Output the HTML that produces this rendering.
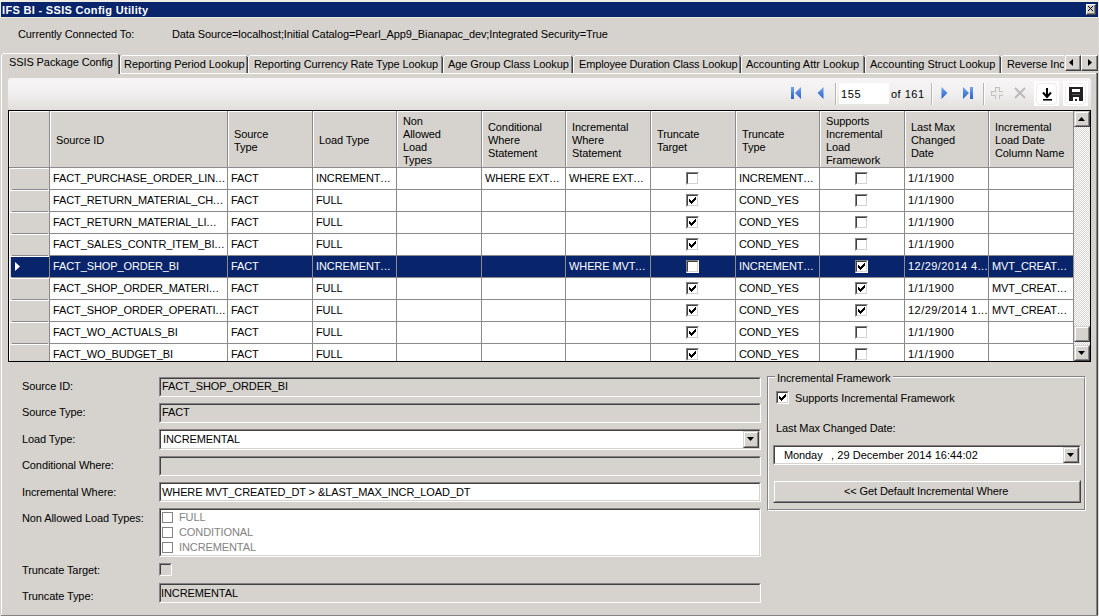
<!DOCTYPE html>
<html><head><meta charset="utf-8"><style>
html,body{margin:0;padding:0}
body{width:1099px;height:616px;overflow:hidden;background:#D6D3CE;position:relative}
div{position:absolute;box-sizing:content-box}
svg{position:absolute}
.t{font-family:"Liberation Sans",sans-serif;font-size:11px;line-height:13px;white-space:pre;color:#000;letter-spacing:-0.1px}
.tb{font-family:"Liberation Sans",sans-serif;font-size:11px;line-height:13px;white-space:pre;color:#fff;font-weight:bold;letter-spacing:0.32px}
</style></head><body>

<div style="left:0px;top:0px;width:1099px;height:2px;background:#EEEBE2;"></div>
<div style="left:0px;top:0px;width:1px;height:18px;background:#EEEBE2;"></div>
<div style="left:1098px;top:0px;width:1px;height:18px;background:#EEEBE2;"></div>
<div style="left:1098px;top:18px;width:1px;height:598px;background:#DCD9D2;"></div>
<div style="left:0px;top:17px;width:1099px;height:1px;background:#EAE7DF;"></div>
<div style="left:1px;top:2px;width:1097px;height:15px;background:#08246B;"></div>
<div class="tb" style="left:2px;top:4px;">IFS BI - SSIS Config Utility</div>
<div style="left:1086px;top:4px;width:8px;height:9px;background:#D6D3CE;border-top:1px solid #fff;border-left:1px solid #fff;border-bottom:1px solid #424142;border-right:1px solid #424142"><div style="left:0;top:0;width:7px;height:8px;border-bottom:1px solid #848284;border-right:1px solid #848284"></div></div>
<svg style="left:1088px;top:6px" width="5" height="5" viewBox="0 0 5 5" shape-rendering="crispEdges"><path d="M0 0h1v1h-1zM1 1h1v1h-1zM2 2h1v1h-1zM3 3h1v1h-1zM4 4h1v1h-1zM4 0h1v1h-1zM3 1h1v1h-1zM1 3h1v1h-1zM0 4h1v1h-1z" fill="#000"/></svg>
<div class="t" style="left:18px;top:28px;">Currently Connected To:</div>
<div class="t" style="left:172px;top:28px;">Data Source=localhost;Initial Catalog=Pearl_App9_Bianapac_dev;Integrated Security=True</div>
<div style="left:1px;top:73px;width:1097px;height:1px;background:#FFFFFF;"></div>
<div style="left:1px;top:73px;width:1px;height:543px;background:#FFFFFF;"></div>
<div style="left:1096px;top:73px;width:1px;height:543px;background:#848284;"></div>
<div style="left:1097px;top:73px;width:1px;height:543px;background:#424142;"></div>
<div style="left:1px;top:615px;width:1097px;height:1px;background:#848284;"></div>
<div style="left:120px;top:55px;width:128px;height:18px;overflow:hidden">
<div style="left:2px;top:0;width:124px;height:1px;background:#fff"></div>
<div style="left:1px;top:1px;width:1px;height:1px;background:#fff"></div>
<div style="left:0;top:2px;width:1px;height:16px;background:#fff"></div>
<div style="left:126px;top:1px;width:1px;height:17px;background:#848284"></div>
<div style="left:127px;top:2px;width:1px;height:16px;background:#424142"></div>
<div class="t" style="left:4px;top:3px;letter-spacing:-0.05px">Reporting Period Lookup</div>
</div>
<div style="left:248px;top:55px;width:195px;height:18px;overflow:hidden">
<div style="left:2px;top:0;width:191px;height:1px;background:#fff"></div>
<div style="left:1px;top:1px;width:1px;height:1px;background:#fff"></div>
<div style="left:0;top:2px;width:1px;height:16px;background:#fff"></div>
<div style="left:193px;top:1px;width:1px;height:17px;background:#848284"></div>
<div style="left:194px;top:2px;width:1px;height:16px;background:#424142"></div>
<div class="t" style="left:6px;top:3px;">Reporting Currency Rate Type Lookup</div>
</div>
<div style="left:443px;top:55px;width:130px;height:18px;overflow:hidden">
<div style="left:2px;top:0;width:126px;height:1px;background:#fff"></div>
<div style="left:1px;top:1px;width:1px;height:1px;background:#fff"></div>
<div style="left:0;top:2px;width:1px;height:16px;background:#fff"></div>
<div style="left:128px;top:1px;width:1px;height:17px;background:#848284"></div>
<div style="left:129px;top:2px;width:1px;height:16px;background:#424142"></div>
<div class="t" style="left:5px;top:3px;">Age Group Class Lookup</div>
</div>
<div style="left:573px;top:55px;width:168px;height:18px;overflow:hidden">
<div style="left:2px;top:0;width:164px;height:1px;background:#fff"></div>
<div style="left:1px;top:1px;width:1px;height:1px;background:#fff"></div>
<div style="left:0;top:2px;width:1px;height:16px;background:#fff"></div>
<div style="left:166px;top:1px;width:1px;height:17px;background:#848284"></div>
<div style="left:167px;top:2px;width:1px;height:16px;background:#424142"></div>
<div class="t" style="left:6px;top:3px;letter-spacing:-0.16px">Employee Duration Class Lookup</div>
</div>
<div style="left:741px;top:55px;width:124px;height:18px;overflow:hidden">
<div style="left:2px;top:0;width:120px;height:1px;background:#fff"></div>
<div style="left:1px;top:1px;width:1px;height:1px;background:#fff"></div>
<div style="left:0;top:2px;width:1px;height:16px;background:#fff"></div>
<div style="left:122px;top:1px;width:1px;height:17px;background:#848284"></div>
<div style="left:123px;top:2px;width:1px;height:16px;background:#424142"></div>
<div class="t" style="left:5px;top:3px;letter-spacing:0px">Accounting Attr Lookup</div>
</div>
<div style="left:865px;top:55px;width:136px;height:18px;overflow:hidden">
<div style="left:2px;top:0;width:132px;height:1px;background:#fff"></div>
<div style="left:1px;top:1px;width:1px;height:1px;background:#fff"></div>
<div style="left:0;top:2px;width:1px;height:16px;background:#fff"></div>
<div style="left:134px;top:1px;width:1px;height:17px;background:#848284"></div>
<div style="left:135px;top:2px;width:1px;height:16px;background:#424142"></div>
<div class="t" style="left:5px;top:3px;letter-spacing:0px">Accounting Struct Lookup</div>
</div>
<div style="left:1001px;top:55px;width:63px;height:18px;overflow:hidden">
<div style="left:2px;top:0;width:86px;height:1px;background:#fff"></div>
<div style="left:1px;top:1px;width:1px;height:1px;background:#fff"></div>
<div style="left:0;top:2px;width:1px;height:16px;background:#fff"></div>
<div style="left:88px;top:1px;width:1px;height:17px;background:#848284"></div>
<div style="left:89px;top:2px;width:1px;height:16px;background:#424142"></div>
<div class="t" style="left:6px;top:3px;">Reverse Incremental Lookup</div>
</div>
<div style="left:1px;top:53px;width:119px;height:21px;background:#D6D3CE">
<div style="left:2px;top:0;width:115px;height:1px;background:#fff"></div>
<div style="left:1px;top:1px;width:1px;height:1px;background:#fff"></div>
<div style="left:0;top:2px;width:1px;height:19px;background:#fff"></div>
<div style="left:117px;top:1px;width:1px;height:20px;background:#848284"></div>
<div style="left:118px;top:2px;width:1px;height:19px;background:#424142"></div>
<div class="t" style="left:8px;top:3px">SSIS Package Config</div>
</div>
<div style="left:1065px;top:55px;width:14px;height:14px;background:#D6D3CE;border-top:1px solid #fff;border-left:1px solid #fff;border-bottom:1px solid #424142;border-right:1px solid #424142"><div style="left:0;top:0;width:13px;height:13px;border-bottom:1px solid #848284;border-right:1px solid #848284"></div></div>
<div style="left:1081px;top:55px;width:15px;height:14px;background:#D6D3CE;border-top:1px solid #fff;border-left:1px solid #fff;border-bottom:1px solid #424142;border-right:1px solid #424142"><div style="left:0;top:0;width:14px;height:13px;border-bottom:1px solid #848284;border-right:1px solid #848284"></div></div>
<svg style="left:1069px;top:59px" width="4" height="7"><path d="M4 0V7L0 3.5z" fill="#000"/></svg>
<svg style="left:1088px;top:59px" width="4" height="7"><path d="M0 0V7L4 3.5z" fill="#000"/></svg>
<div style="left:8px;top:78px;width:1083px;height:32px;border-radius:3px;background:linear-gradient(#F7F5F5,#F0EEEE 50%,#E2DEDB)"></div>
<svg style="left:791px;top:87px" width="11" height="12" viewBox="0 0 11 12"><defs><linearGradient id="bl" x1="0" y1="0" x2="0" y2="1"><stop offset="0" stop-color="#6FA4F0"/><stop offset="1" stop-color="#2A62C8"/></linearGradient></defs><rect x="0" y="0" width="3" height="12" fill="url(#bl)"/><path d="M10 0V12L4 6z" fill="url(#bl)"/></svg>
<svg style="left:817px;top:87px" width="7" height="12" viewBox="0 0 7 12"><path d="M6.5 0V12L0.5 6z" fill="url(#bl)"/></svg>
<div style="left:835px;top:83px;width:1px;height:22px;background:#B8B4B0"></div>
<div style="left:836px;top:83px;width:1px;height:22px;background:#FFFFFF"></div>
<div style="left:839px;top:83px;width:50px;height:21px;background:#fff"></div>
<div class="t" style="left:841px;top:88px;letter-spacing:0.6px">155</div>
<div class="t" style="left:891px;top:88px;letter-spacing:0.5px">of 161</div>
<div style="left:931px;top:83px;width:1px;height:22px;background:#B8B4B0"></div>
<div style="left:932px;top:83px;width:1px;height:22px;background:#FFFFFF"></div>
<svg style="left:941px;top:87px" width="7" height="12" viewBox="0 0 7 12"><path d="M0.5 0V12L6.5 6z" fill="url(#bl)"/></svg>
<svg style="left:963px;top:87px" width="11" height="12" viewBox="0 0 11 12"><path d="M0 0V12L6 6z" fill="url(#bl)"/><rect x="7" y="0" width="3" height="12" fill="url(#bl)"/></svg>
<div style="left:983px;top:83px;width:1px;height:22px;background:#B8B4B0"></div>
<div style="left:984px;top:83px;width:1px;height:22px;background:#FFFFFF"></div>
<svg style="left:991px;top:87px" width="12" height="12" viewBox="0 0 12 12" shape-rendering="crispEdges"><path d="M4 0H8V4H12V8H8V12H4V8H0V4H4z" fill="#EDEBEA" stroke="#C4C2C0" stroke-width="1"/></svg>
<svg style="left:1014px;top:87px" width="12" height="12" viewBox="0 0 12 12"><path d="M1 1L11 11M11 1L1 11" stroke="#BDBBB9" stroke-width="2"/></svg>
<div style="left:1034px;top:81px;width:25px;height:25px;background:#fff"></div>
<div style="left:1036px;top:83px;width:19px;height:20px;border:1px solid #EFEBEF;border-radius:4px"></div>
<svg style="left:1040px;top:86px" width="14" height="16" viewBox="0 0 14 16"><path d="M7 2V11M3 6.5L7 11L11 6.5" stroke="#000" stroke-width="2" fill="none"/><rect x="3" y="13" width="9" height="1.6" fill="#000"/></svg>
<div style="left:1063px;top:81px;width:25px;height:25px;background:#fff"></div>
<div style="left:1065px;top:83px;width:19px;height:20px;border:1px solid #EFEBEF;border-radius:4px"></div>
<svg style="left:1069px;top:87px" width="14" height="14" viewBox="0 0 14 14" shape-rendering="crispEdges"><rect x="0" y="0" width="14" height="14" fill="#222"/><rect x="3" y="2" width="8" height="3" fill="#fff"/><rect x="3" y="7" width="8" height="1" fill="#555"/><rect x="4" y="10" width="6" height="4" fill="#fff"/><rect x="6" y="12" width="2" height="2" fill="#222"/></svg>
<div style="left:8px;top:110px;width:1081px;height:250px;border:1px solid #000;background:#fff;overflow:hidden">
<div style="left:0px;top:0px;width:1065px;height:56px;background:#D6D3CE;"></div>
<div style="left:0px;top:0px;width:40px;height:250px;background:#D6D3CE;"></div>
<div style="left:0px;top:0px;width:1064px;height:1px;background:#FFFFFF;"></div>
<div style="left:0px;top:0px;width:1px;height:250px;background:#FFFFFF;"></div>
<div style="left:0px;top:56px;width:1064px;height:1px;background:#8C8A8C;"></div>
<div style="left:40px;top:0px;width:1px;height:250px;background:#8C8A8C;"></div>
<div style="left:218px;top:0px;width:1px;height:250px;background:#8C8A8C;"></div>
<div style="left:303px;top:0px;width:1px;height:250px;background:#8C8A8C;"></div>
<div style="left:387px;top:0px;width:1px;height:250px;background:#8C8A8C;"></div>
<div style="left:472px;top:0px;width:1px;height:250px;background:#8C8A8C;"></div>
<div style="left:556px;top:0px;width:1px;height:250px;background:#8C8A8C;"></div>
<div style="left:641px;top:0px;width:1px;height:250px;background:#8C8A8C;"></div>
<div style="left:726px;top:0px;width:1px;height:250px;background:#8C8A8C;"></div>
<div style="left:810px;top:0px;width:1px;height:250px;background:#8C8A8C;"></div>
<div style="left:895px;top:0px;width:1px;height:250px;background:#8C8A8C;"></div>
<div style="left:979px;top:0px;width:1px;height:250px;background:#8C8A8C;"></div>
<div style="left:1064px;top:0px;width:1px;height:250px;background:#8C8A8C;"></div>
<div style="left:41px;top:1px;width:1px;height:55px;background:#FFFFFF;"></div>
<div style="left:219px;top:1px;width:1px;height:55px;background:#FFFFFF;"></div>
<div style="left:304px;top:1px;width:1px;height:55px;background:#FFFFFF;"></div>
<div style="left:388px;top:1px;width:1px;height:55px;background:#FFFFFF;"></div>
<div style="left:473px;top:1px;width:1px;height:55px;background:#FFFFFF;"></div>
<div style="left:557px;top:1px;width:1px;height:55px;background:#FFFFFF;"></div>
<div style="left:642px;top:1px;width:1px;height:55px;background:#FFFFFF;"></div>
<div style="left:727px;top:1px;width:1px;height:55px;background:#FFFFFF;"></div>
<div style="left:811px;top:1px;width:1px;height:55px;background:#FFFFFF;"></div>
<div style="left:896px;top:1px;width:1px;height:55px;background:#FFFFFF;"></div>
<div style="left:980px;top:1px;width:1px;height:55px;background:#FFFFFF;"></div>
<div style="left:1px;top:57px;width:39px;height:1px;background:#FFFFFF;"></div>
<div style="left:3px;top:78px;width:36px;height:1px;background:#8C8A8C;"></div>
<div style="left:41px;top:78px;width:1023px;height:1px;background:#8C8A8C;"></div>
<div class="t" style="left:44px;top:61px;color:#000;">FACT_PURCHASE_ORDER_LIN<span style="letter-spacing:0.35px">...</span></div>
<div class="t" style="left:222px;top:61px;color:#000;">FACT</div>
<div class="t" style="left:307px;top:61px;color:#000;">INCREMENT<span style="letter-spacing:0.35px">...</span></div>
<div class="t" style="left:476px;top:61px;color:#000;">WHERE EXT<span style="letter-spacing:0.35px">...</span></div>
<div class="t" style="left:560px;top:61px;color:#000;">WHERE EXT<span style="letter-spacing:0.35px">...</span></div>
<div class="t" style="left:730px;top:61px;color:#000;">INCREMENT<span style="letter-spacing:0.35px">...</span></div>
<div class="t" style="left:899px;top:61px;color:#000;letter-spacing:0.45px;">1/1/1900</div>
<div style="left:677px;top:61px;width:11px;height:11px;background:#fff;border-top:1px solid #848284;border-left:1px solid #848284;border-bottom:1px solid #fff;border-right:1px solid #fff"><div style="left:0;top:0;width:9px;height:9px;border-top:1px solid #424142;border-left:1px solid #424142;border-bottom:1px solid #D6D3CE;border-right:1px solid #D6D3CE"></div></div>
<div style="left:846px;top:61px;width:11px;height:11px;background:#fff;border-top:1px solid #848284;border-left:1px solid #848284;border-bottom:1px solid #fff;border-right:1px solid #fff"><div style="left:0;top:0;width:9px;height:9px;border-top:1px solid #424142;border-left:1px solid #424142;border-bottom:1px solid #D6D3CE;border-right:1px solid #D6D3CE"></div></div>
<div style="left:1px;top:79px;width:39px;height:1px;background:#FFFFFF;"></div>
<div style="left:3px;top:100px;width:36px;height:1px;background:#8C8A8C;"></div>
<div style="left:41px;top:100px;width:1023px;height:1px;background:#8C8A8C;"></div>
<div class="t" style="left:44px;top:83px;color:#000;">FACT_RETURN_MATERIAL_CH<span style="letter-spacing:0.35px">...</span></div>
<div class="t" style="left:222px;top:83px;color:#000;">FACT</div>
<div class="t" style="left:307px;top:83px;color:#000;">FULL</div>
<div class="t" style="left:730px;top:83px;color:#000;">COND_YES</div>
<div class="t" style="left:899px;top:83px;color:#000;letter-spacing:0.45px;">1/1/1900</div>
<div style="left:677px;top:83px;width:11px;height:11px;background:#fff;border-top:1px solid #848284;border-left:1px solid #848284;border-bottom:1px solid #fff;border-right:1px solid #fff"><div style="left:0;top:0;width:9px;height:9px;border-top:1px solid #424142;border-left:1px solid #424142;border-bottom:1px solid #D6D3CE;border-right:1px solid #D6D3CE"></div></div>
<svg style="left:680px;top:86px" width="7" height="7" viewBox="0 0 7 7" shape-rendering="crispEdges"><path d="M6 0h1v3h-1zM5 1h1v3h-1zM4 2h1v3h-1zM3 3h1v3h-1zM2 4h1v3h-1zM1 3h1v3h-1zM0 2h1v3h-1z" fill="#000"/></svg>
<div style="left:846px;top:83px;width:11px;height:11px;background:#fff;border-top:1px solid #848284;border-left:1px solid #848284;border-bottom:1px solid #fff;border-right:1px solid #fff"><div style="left:0;top:0;width:9px;height:9px;border-top:1px solid #424142;border-left:1px solid #424142;border-bottom:1px solid #D6D3CE;border-right:1px solid #D6D3CE"></div></div>
<div style="left:1px;top:101px;width:39px;height:1px;background:#FFFFFF;"></div>
<div style="left:3px;top:122px;width:36px;height:1px;background:#8C8A8C;"></div>
<div style="left:41px;top:122px;width:1023px;height:1px;background:#8C8A8C;"></div>
<div class="t" style="left:44px;top:105px;color:#000;">FACT_RETURN_MATERIAL_LI<span style="letter-spacing:0.35px">...</span></div>
<div class="t" style="left:222px;top:105px;color:#000;">FACT</div>
<div class="t" style="left:307px;top:105px;color:#000;">FULL</div>
<div class="t" style="left:730px;top:105px;color:#000;">COND_YES</div>
<div class="t" style="left:899px;top:105px;color:#000;letter-spacing:0.45px;">1/1/1900</div>
<div style="left:677px;top:105px;width:11px;height:11px;background:#fff;border-top:1px solid #848284;border-left:1px solid #848284;border-bottom:1px solid #fff;border-right:1px solid #fff"><div style="left:0;top:0;width:9px;height:9px;border-top:1px solid #424142;border-left:1px solid #424142;border-bottom:1px solid #D6D3CE;border-right:1px solid #D6D3CE"></div></div>
<svg style="left:680px;top:108px" width="7" height="7" viewBox="0 0 7 7" shape-rendering="crispEdges"><path d="M6 0h1v3h-1zM5 1h1v3h-1zM4 2h1v3h-1zM3 3h1v3h-1zM2 4h1v3h-1zM1 3h1v3h-1zM0 2h1v3h-1z" fill="#000"/></svg>
<div style="left:846px;top:105px;width:11px;height:11px;background:#fff;border-top:1px solid #848284;border-left:1px solid #848284;border-bottom:1px solid #fff;border-right:1px solid #fff"><div style="left:0;top:0;width:9px;height:9px;border-top:1px solid #424142;border-left:1px solid #424142;border-bottom:1px solid #D6D3CE;border-right:1px solid #D6D3CE"></div></div>
<div style="left:1px;top:123px;width:39px;height:1px;background:#FFFFFF;"></div>
<div style="left:3px;top:144px;width:36px;height:1px;background:#8C8A8C;"></div>
<div style="left:41px;top:144px;width:1023px;height:1px;background:#8C8A8C;"></div>
<div class="t" style="left:44px;top:127px;color:#000;">FACT_SALES_CONTR_ITEM_BI<span style="letter-spacing:0.35px">...</span></div>
<div class="t" style="left:222px;top:127px;color:#000;">FACT</div>
<div class="t" style="left:307px;top:127px;color:#000;">FULL</div>
<div class="t" style="left:730px;top:127px;color:#000;">COND_YES</div>
<div class="t" style="left:899px;top:127px;color:#000;letter-spacing:0.45px;">1/1/1900</div>
<div style="left:677px;top:127px;width:11px;height:11px;background:#fff;border-top:1px solid #848284;border-left:1px solid #848284;border-bottom:1px solid #fff;border-right:1px solid #fff"><div style="left:0;top:0;width:9px;height:9px;border-top:1px solid #424142;border-left:1px solid #424142;border-bottom:1px solid #D6D3CE;border-right:1px solid #D6D3CE"></div></div>
<svg style="left:680px;top:130px" width="7" height="7" viewBox="0 0 7 7" shape-rendering="crispEdges"><path d="M6 0h1v3h-1zM5 1h1v3h-1zM4 2h1v3h-1zM3 3h1v3h-1zM2 4h1v3h-1zM1 3h1v3h-1zM0 2h1v3h-1z" fill="#000"/></svg>
<div style="left:846px;top:127px;width:11px;height:11px;background:#fff;border-top:1px solid #848284;border-left:1px solid #848284;border-bottom:1px solid #fff;border-right:1px solid #fff"><div style="left:0;top:0;width:9px;height:9px;border-top:1px solid #424142;border-left:1px solid #424142;border-bottom:1px solid #D6D3CE;border-right:1px solid #D6D3CE"></div></div>
<div style="left:1px;top:145px;width:39px;height:1px;background:#FFFFFF;"></div>
<div style="left:3px;top:166px;width:36px;height:1px;background:#8C8A8C;"></div>
<div style="left:41px;top:166px;width:1023px;height:1px;background:#8C8A8C;"></div>
<div style="left:2px;top:146px;width:38px;height:20px;background:#08246B;"></div>
<div style="left:41px;top:145px;width:1023px;height:21px;background:#08246B;"></div>
<div style="left:218px;top:145px;width:1px;height:21px;background:#8C8A8C;"></div>
<div style="left:303px;top:145px;width:1px;height:21px;background:#8C8A8C;"></div>
<div style="left:387px;top:145px;width:1px;height:21px;background:#8C8A8C;"></div>
<div style="left:472px;top:145px;width:1px;height:21px;background:#8C8A8C;"></div>
<div style="left:556px;top:145px;width:1px;height:21px;background:#8C8A8C;"></div>
<div style="left:641px;top:145px;width:1px;height:21px;background:#8C8A8C;"></div>
<div style="left:726px;top:145px;width:1px;height:21px;background:#8C8A8C;"></div>
<div style="left:810px;top:145px;width:1px;height:21px;background:#8C8A8C;"></div>
<div style="left:895px;top:145px;width:1px;height:21px;background:#8C8A8C;"></div>
<div style="left:979px;top:145px;width:1px;height:21px;background:#8C8A8C;"></div>
<svg style="left:6px;top:151px" width="5" height="9"><path d="M0 0V9L5 4.5z" fill="#fff"/></svg>
<div class="t" style="left:44px;top:149px;color:#fff;">FACT_SHOP_ORDER_BI</div>
<div class="t" style="left:222px;top:149px;color:#fff;">FACT</div>
<div class="t" style="left:307px;top:149px;color:#fff;">INCREMENT<span style="letter-spacing:0.35px">...</span></div>
<div class="t" style="left:560px;top:149px;color:#fff;">WHERE MVT<span style="letter-spacing:0.35px">...</span></div>
<div class="t" style="left:730px;top:149px;color:#fff;">INCREMENT<span style="letter-spacing:0.35px">...</span></div>
<div class="t" style="left:899px;top:149px;color:#fff;letter-spacing:0.45px;">12/29/2014 4<span style="letter-spacing:0.35px">...</span></div>
<div class="t" style="left:983px;top:149px;color:#fff;">MVT_CREAT<span style="letter-spacing:0.35px">...</span></div>
<div style="left:677px;top:149px;width:11px;height:11px;background:#fff;border-top:1px solid #848284;border-left:1px solid #848284;border-bottom:1px solid #fff;border-right:1px solid #fff"><div style="left:0;top:0;width:9px;height:9px;border-top:1px solid #424142;border-left:1px solid #424142;border-bottom:1px solid #D6D3CE;border-right:1px solid #D6D3CE"></div></div>
<div style="left:846px;top:149px;width:11px;height:11px;background:#fff;border-top:1px solid #848284;border-left:1px solid #848284;border-bottom:1px solid #fff;border-right:1px solid #fff"><div style="left:0;top:0;width:9px;height:9px;border-top:1px solid #424142;border-left:1px solid #424142;border-bottom:1px solid #D6D3CE;border-right:1px solid #D6D3CE"></div></div>
<svg style="left:849px;top:152px" width="7" height="7" viewBox="0 0 7 7" shape-rendering="crispEdges"><path d="M6 0h1v3h-1zM5 1h1v3h-1zM4 2h1v3h-1zM3 3h1v3h-1zM2 4h1v3h-1zM1 3h1v3h-1zM0 2h1v3h-1z" fill="#000"/></svg>
<div style="left:1px;top:167px;width:39px;height:1px;background:#FFFFFF;"></div>
<div style="left:3px;top:188px;width:36px;height:1px;background:#8C8A8C;"></div>
<div style="left:41px;top:188px;width:1023px;height:1px;background:#8C8A8C;"></div>
<div class="t" style="left:44px;top:171px;color:#000;">FACT_SHOP_ORDER_MATERI<span style="letter-spacing:0.35px">...</span></div>
<div class="t" style="left:222px;top:171px;color:#000;">FACT</div>
<div class="t" style="left:307px;top:171px;color:#000;">FULL</div>
<div class="t" style="left:730px;top:171px;color:#000;">COND_YES</div>
<div class="t" style="left:899px;top:171px;color:#000;letter-spacing:0.45px;">1/1/1900</div>
<div class="t" style="left:983px;top:171px;color:#000;">MVT_CREAT<span style="letter-spacing:0.35px">...</span></div>
<div style="left:677px;top:171px;width:11px;height:11px;background:#fff;border-top:1px solid #848284;border-left:1px solid #848284;border-bottom:1px solid #fff;border-right:1px solid #fff"><div style="left:0;top:0;width:9px;height:9px;border-top:1px solid #424142;border-left:1px solid #424142;border-bottom:1px solid #D6D3CE;border-right:1px solid #D6D3CE"></div></div>
<svg style="left:680px;top:174px" width="7" height="7" viewBox="0 0 7 7" shape-rendering="crispEdges"><path d="M6 0h1v3h-1zM5 1h1v3h-1zM4 2h1v3h-1zM3 3h1v3h-1zM2 4h1v3h-1zM1 3h1v3h-1zM0 2h1v3h-1z" fill="#000"/></svg>
<div style="left:846px;top:171px;width:11px;height:11px;background:#fff;border-top:1px solid #848284;border-left:1px solid #848284;border-bottom:1px solid #fff;border-right:1px solid #fff"><div style="left:0;top:0;width:9px;height:9px;border-top:1px solid #424142;border-left:1px solid #424142;border-bottom:1px solid #D6D3CE;border-right:1px solid #D6D3CE"></div></div>
<svg style="left:849px;top:174px" width="7" height="7" viewBox="0 0 7 7" shape-rendering="crispEdges"><path d="M6 0h1v3h-1zM5 1h1v3h-1zM4 2h1v3h-1zM3 3h1v3h-1zM2 4h1v3h-1zM1 3h1v3h-1zM0 2h1v3h-1z" fill="#000"/></svg>
<div style="left:1px;top:189px;width:39px;height:1px;background:#FFFFFF;"></div>
<div style="left:3px;top:210px;width:36px;height:1px;background:#8C8A8C;"></div>
<div style="left:41px;top:210px;width:1023px;height:1px;background:#8C8A8C;"></div>
<div class="t" style="left:44px;top:193px;color:#000;">FACT_SHOP_ORDER_OPERATI<span style="letter-spacing:0.35px">...</span></div>
<div class="t" style="left:222px;top:193px;color:#000;">FACT</div>
<div class="t" style="left:307px;top:193px;color:#000;">FULL</div>
<div class="t" style="left:730px;top:193px;color:#000;">COND_YES</div>
<div class="t" style="left:899px;top:193px;color:#000;letter-spacing:0.45px;">12/29/2014 1<span style="letter-spacing:0.35px">...</span></div>
<div class="t" style="left:983px;top:193px;color:#000;">MVT_CREAT<span style="letter-spacing:0.35px">...</span></div>
<div style="left:677px;top:193px;width:11px;height:11px;background:#fff;border-top:1px solid #848284;border-left:1px solid #848284;border-bottom:1px solid #fff;border-right:1px solid #fff"><div style="left:0;top:0;width:9px;height:9px;border-top:1px solid #424142;border-left:1px solid #424142;border-bottom:1px solid #D6D3CE;border-right:1px solid #D6D3CE"></div></div>
<svg style="left:680px;top:196px" width="7" height="7" viewBox="0 0 7 7" shape-rendering="crispEdges"><path d="M6 0h1v3h-1zM5 1h1v3h-1zM4 2h1v3h-1zM3 3h1v3h-1zM2 4h1v3h-1zM1 3h1v3h-1zM0 2h1v3h-1z" fill="#000"/></svg>
<div style="left:846px;top:193px;width:11px;height:11px;background:#fff;border-top:1px solid #848284;border-left:1px solid #848284;border-bottom:1px solid #fff;border-right:1px solid #fff"><div style="left:0;top:0;width:9px;height:9px;border-top:1px solid #424142;border-left:1px solid #424142;border-bottom:1px solid #D6D3CE;border-right:1px solid #D6D3CE"></div></div>
<svg style="left:849px;top:196px" width="7" height="7" viewBox="0 0 7 7" shape-rendering="crispEdges"><path d="M6 0h1v3h-1zM5 1h1v3h-1zM4 2h1v3h-1zM3 3h1v3h-1zM2 4h1v3h-1zM1 3h1v3h-1zM0 2h1v3h-1z" fill="#000"/></svg>
<div style="left:1px;top:211px;width:39px;height:1px;background:#FFFFFF;"></div>
<div style="left:3px;top:232px;width:36px;height:1px;background:#8C8A8C;"></div>
<div style="left:41px;top:232px;width:1023px;height:1px;background:#8C8A8C;"></div>
<div class="t" style="left:44px;top:215px;color:#000;">FACT_WO_ACTUALS_BI</div>
<div class="t" style="left:222px;top:215px;color:#000;">FACT</div>
<div class="t" style="left:307px;top:215px;color:#000;">FULL</div>
<div class="t" style="left:730px;top:215px;color:#000;">COND_YES</div>
<div class="t" style="left:899px;top:215px;color:#000;letter-spacing:0.45px;">1/1/1900</div>
<div style="left:677px;top:215px;width:11px;height:11px;background:#fff;border-top:1px solid #848284;border-left:1px solid #848284;border-bottom:1px solid #fff;border-right:1px solid #fff"><div style="left:0;top:0;width:9px;height:9px;border-top:1px solid #424142;border-left:1px solid #424142;border-bottom:1px solid #D6D3CE;border-right:1px solid #D6D3CE"></div></div>
<svg style="left:680px;top:218px" width="7" height="7" viewBox="0 0 7 7" shape-rendering="crispEdges"><path d="M6 0h1v3h-1zM5 1h1v3h-1zM4 2h1v3h-1zM3 3h1v3h-1zM2 4h1v3h-1zM1 3h1v3h-1zM0 2h1v3h-1z" fill="#000"/></svg>
<div style="left:846px;top:215px;width:11px;height:11px;background:#fff;border-top:1px solid #848284;border-left:1px solid #848284;border-bottom:1px solid #fff;border-right:1px solid #fff"><div style="left:0;top:0;width:9px;height:9px;border-top:1px solid #424142;border-left:1px solid #424142;border-bottom:1px solid #D6D3CE;border-right:1px solid #D6D3CE"></div></div>
<div style="left:1px;top:233px;width:39px;height:1px;background:#FFFFFF;"></div>
<div style="left:3px;top:254px;width:36px;height:1px;background:#8C8A8C;"></div>
<div style="left:41px;top:254px;width:1023px;height:1px;background:#8C8A8C;"></div>
<div class="t" style="left:44px;top:237px;color:#000;">FACT_WO_BUDGET_BI</div>
<div class="t" style="left:222px;top:237px;color:#000;">FACT</div>
<div class="t" style="left:307px;top:237px;color:#000;">FULL</div>
<div class="t" style="left:730px;top:237px;color:#000;">COND_YES</div>
<div class="t" style="left:899px;top:237px;color:#000;letter-spacing:0.45px;">1/1/1900</div>
<div style="left:677px;top:237px;width:11px;height:11px;background:#fff;border-top:1px solid #848284;border-left:1px solid #848284;border-bottom:1px solid #fff;border-right:1px solid #fff"><div style="left:0;top:0;width:9px;height:9px;border-top:1px solid #424142;border-left:1px solid #424142;border-bottom:1px solid #D6D3CE;border-right:1px solid #D6D3CE"></div></div>
<svg style="left:680px;top:240px" width="7" height="7" viewBox="0 0 7 7" shape-rendering="crispEdges"><path d="M6 0h1v3h-1zM5 1h1v3h-1zM4 2h1v3h-1zM3 3h1v3h-1zM2 4h1v3h-1zM1 3h1v3h-1zM0 2h1v3h-1z" fill="#000"/></svg>
<div style="left:846px;top:237px;width:11px;height:11px;background:#fff;border-top:1px solid #848284;border-left:1px solid #848284;border-bottom:1px solid #fff;border-right:1px solid #fff"><div style="left:0;top:0;width:9px;height:9px;border-top:1px solid #424142;border-left:1px solid #424142;border-bottom:1px solid #D6D3CE;border-right:1px solid #D6D3CE"></div></div>
<div class="t" style="left:47px;top:23px">Source ID</div>
<div class="t" style="left:225px;top:17px">Source</div>
<div class="t" style="left:225px;top:30px">Type</div>
<div class="t" style="left:310px;top:23px">Load Type</div>
<div class="t" style="left:394px;top:4px">Non</div>
<div class="t" style="left:394px;top:17px">Allowed</div>
<div class="t" style="left:394px;top:30px">Load</div>
<div class="t" style="left:394px;top:43px">Types</div>
<div class="t" style="left:479px;top:10px">Conditional</div>
<div class="t" style="left:479px;top:23px">Where</div>
<div class="t" style="left:479px;top:36px">Statement</div>
<div class="t" style="left:563px;top:10px">Incremental</div>
<div class="t" style="left:563px;top:23px">Where</div>
<div class="t" style="left:563px;top:36px">Statement</div>
<div class="t" style="left:648px;top:17px">Truncate</div>
<div class="t" style="left:648px;top:30px">Target</div>
<div class="t" style="left:733px;top:17px">Truncate</div>
<div class="t" style="left:733px;top:30px">Type</div>
<div class="t" style="left:817px;top:4px">Supports</div>
<div class="t" style="left:817px;top:17px">Incremental</div>
<div class="t" style="left:817px;top:30px">Load</div>
<div class="t" style="left:817px;top:43px">Framework</div>
<div class="t" style="left:902px;top:10px">Last Max</div>
<div class="t" style="left:902px;top:23px">Changed</div>
<div class="t" style="left:902px;top:36px">Date</div>
<div class="t" style="left:986px;top:10px">Incremental</div>
<div class="t" style="left:986px;top:23px">Load Date</div>
<div class="t" style="left:986px;top:36px">Column Name</div>
</div>
<div style="left:1074px;top:111px;width:16px;height:250px;background:repeating-conic-gradient(#fff 0 25%, #D6D3CE 0 50%) 0 0/2px 2px"></div>
<div style="left:1074px;top:111px;width:14px;height:14px;background:#D6D3CE;border-top:1px solid #D6D3CE;border-left:1px solid #D6D3CE;border-bottom:1px solid #424142;border-right:1px solid #424142"><div style="left:0;top:0;width:12px;height:12px;border-top:1px solid #fff;border-left:1px solid #fff;border-bottom:1px solid #848284;border-right:1px solid #848284"></div></div>
<svg style="left:1078px;top:117px" width="7" height="4" viewBox="0 0 7 4"><path d="M3.5 0L7 4H0z" fill="#000"/></svg>
<div style="left:1074px;top:326px;width:14px;height:14px;background:#D6D3CE;border-top:1px solid #D6D3CE;border-left:1px solid #D6D3CE;border-bottom:1px solid #424142;border-right:1px solid #424142"><div style="left:0;top:0;width:12px;height:12px;border-top:1px solid #fff;border-left:1px solid #fff;border-bottom:1px solid #848284;border-right:1px solid #848284"></div></div>
<div style="left:1074px;top:345px;width:14px;height:14px;background:#D6D3CE;border-top:1px solid #D6D3CE;border-left:1px solid #D6D3CE;border-bottom:1px solid #424142;border-right:1px solid #424142"><div style="left:0;top:0;width:12px;height:12px;border-top:1px solid #fff;border-left:1px solid #fff;border-bottom:1px solid #848284;border-right:1px solid #848284"></div></div>
<svg style="left:1078px;top:351px" width="7" height="4" viewBox="0 0 7 4"><path d="M0 0H7L3.5 4z" fill="#000"/></svg>
<div class="t" style="left:22px;top:380px;">Source ID:</div>
<div class="t" style="left:22px;top:406px;">Source Type:</div>
<div class="t" style="left:22px;top:433px;">Load Type:</div>
<div class="t" style="left:22px;top:459px;">Conditional Where:</div>
<div class="t" style="left:22px;top:486px;">Incremental Where:</div>
<div class="t" style="left:22px;top:512px;">Non Allowed Load Types:</div>
<div class="t" style="left:22px;top:564px;">Truncate Target:</div>
<div class="t" style="left:22px;top:590px;">Truncate Type:</div>
<div style="left:159px;top:377px;width:600px;height:18px;background:#D6D3CE;border-top:1px solid #848284;border-left:1px solid #848284;border-bottom:1px solid #fff;border-right:1px solid #fff"><div style="left:0;top:0;width:598px;height:16px;border-top:1px solid #424142;border-left:1px solid #424142;border-bottom:1px solid #D6D3CE;border-right:1px solid #D6D3CE"></div></div>
<div class="t" style="left:162px;top:380px;">FACT_SHOP_ORDER_BI</div>
<div style="left:159px;top:403px;width:600px;height:18px;background:#D6D3CE;border-top:1px solid #848284;border-left:1px solid #848284;border-bottom:1px solid #fff;border-right:1px solid #fff"><div style="left:0;top:0;width:598px;height:16px;border-top:1px solid #424142;border-left:1px solid #424142;border-bottom:1px solid #D6D3CE;border-right:1px solid #D6D3CE"></div></div>
<div class="t" style="left:162px;top:406px;">FACT</div>
<div style="left:159px;top:429px;width:600px;height:19px;background:#fff;border-top:1px solid #848284;border-left:1px solid #848284;border-bottom:1px solid #fff;border-right:1px solid #fff"><div style="left:0;top:0;width:598px;height:17px;border-top:1px solid #424142;border-left:1px solid #424142;border-bottom:1px solid #D6D3CE;border-right:1px solid #D6D3CE"></div></div>
<div class="t" style="left:163px;top:433px;">INCREMENTAL</div>
<div style="left:743px;top:431px;width:14px;height:15px;background:#D6D3CE;border-top:1px solid #D6D3CE;border-left:1px solid #D6D3CE;border-bottom:1px solid #424142;border-right:1px solid #424142"><div style="left:0;top:0;width:12px;height:13px;border-top:1px solid #fff;border-left:1px solid #fff;border-bottom:1px solid #848284;border-right:1px solid #848284"></div></div>
<svg style="left:747px;top:437px" width="7" height="4" viewBox="0 0 7 4"><path d="M0 0H7L3.5 4z" fill="#000"/></svg>
<div style="left:159px;top:456px;width:600px;height:18px;background:#D6D3CE;border-top:1px solid #848284;border-left:1px solid #848284;border-bottom:1px solid #fff;border-right:1px solid #fff"><div style="left:0;top:0;width:598px;height:16px;border-top:1px solid #424142;border-left:1px solid #424142;border-bottom:1px solid #D6D3CE;border-right:1px solid #D6D3CE"></div></div>
<div style="left:159px;top:482px;width:600px;height:18px;background:#fff;border-top:1px solid #848284;border-left:1px solid #848284;border-bottom:1px solid #fff;border-right:1px solid #fff"><div style="left:0;top:0;width:598px;height:16px;border-top:1px solid #424142;border-left:1px solid #424142;border-bottom:1px solid #D6D3CE;border-right:1px solid #D6D3CE"></div></div>
<div class="t" style="left:162px;top:486px;">WHERE MVT_CREATED_DT &gt; &amp;LAST_MAX_INCR_LOAD_DT</div>
<div style="left:159px;top:508px;width:600px;height:47px;background:#fff;border-top:1px solid #848284;border-left:1px solid #848284;border-bottom:1px solid #fff;border-right:1px solid #fff"><div style="left:0;top:0;width:598px;height:45px;border-top:1px solid #424142;border-left:1px solid #424142;border-bottom:1px solid #D6D3CE;border-right:1px solid #D6D3CE"></div></div>
<div style="left:162px;top:512px;width:9px;height:9px;border:1px solid #848284;background:#fff"></div>
<div class="t" style="left:179px;top:511px;color:#848284">FULL</div>
<div style="left:162px;top:527px;width:9px;height:9px;border:1px solid #848284;background:#fff"></div>
<div class="t" style="left:179px;top:526px;color:#848284">CONDITIONAL</div>
<div style="left:162px;top:542px;width:9px;height:9px;border:1px solid #848284;background:#fff"></div>
<div class="t" style="left:179px;top:541px;color:#848284">INCREMENTAL</div>
<div style="left:159px;top:563px;width:11px;height:11px;background:#D6D3CE;border-top:1px solid #848284;border-left:1px solid #848284;border-bottom:1px solid #fff;border-right:1px solid #fff"><div style="left:0;top:0;width:9px;height:9px;border-top:1px solid #424142;border-left:1px solid #424142;border-bottom:1px solid #D6D3CE;border-right:1px solid #D6D3CE"></div></div>
<div style="left:159px;top:583px;width:600px;height:18px;background:#D6D3CE;border-top:1px solid #848284;border-left:1px solid #848284;border-bottom:1px solid #fff;border-right:1px solid #fff"><div style="left:0;top:0;width:598px;height:16px;border-top:1px solid #424142;border-left:1px solid #424142;border-bottom:1px solid #D6D3CE;border-right:1px solid #D6D3CE"></div></div>
<div class="t" style="left:161px;top:587px;">INCREMENTAL</div>
<div style="left:767px;top:376px;width:317px;height:133px;border-top:1px solid #848284;border-left:1px solid #848284;border-right:1px solid #fff;border-bottom:1px solid #fff"><div style="left:0;top:0;width:315px;height:131px;border-top:1px solid #fff;border-left:1px solid #fff;border-right:1px solid #848284;border-bottom:1px solid #848284"></div></div>
<div style="left:775px;top:370px;width:118px;height:14px;background:#D6D3CE;"></div>
<div class="t" style="left:777px;top:372px;">Incremental Framework</div>
<div style="left:776px;top:391px;width:11px;height:11px;background:#fff;border-top:1px solid #848284;border-left:1px solid #848284;border-bottom:1px solid #fff;border-right:1px solid #fff"><div style="left:0;top:0;width:9px;height:9px;border-top:1px solid #424142;border-left:1px solid #424142;border-bottom:1px solid #D6D3CE;border-right:1px solid #D6D3CE"></div></div>
<svg style="left:779px;top:394px" width="7" height="7" viewBox="0 0 7 7" shape-rendering="crispEdges"><path d="M6 0h1v3h-1zM5 1h1v3h-1zM4 2h1v3h-1zM3 3h1v3h-1zM2 4h1v3h-1zM1 3h1v3h-1zM0 2h1v3h-1z" fill="#000"/></svg>
<div class="t" style="left:795px;top:392px;">Supports Incremental Framework</div>
<div class="t" style="left:776px;top:422px;">Last Max Changed Date:</div>
<div style="left:773px;top:445px;width:306px;height:18px;background:#fff;border-top:1px solid #848284;border-left:1px solid #848284;border-bottom:1px solid #fff;border-right:1px solid #fff"><div style="left:0;top:0;width:304px;height:16px;border-top:1px solid #424142;border-left:1px solid #424142;border-bottom:1px solid #D6D3CE;border-right:1px solid #D6D3CE"></div></div>
<div class="t" style="left:784px;top:449px;">Monday</div>
<div class="t" style="left:831px;top:449px;letter-spacing:0.05px">, 29 December 2014 16:44:02</div>
<div style="left:1063px;top:447px;width:14px;height:14px;background:#D6D3CE;border-top:1px solid #D6D3CE;border-left:1px solid #D6D3CE;border-bottom:1px solid #424142;border-right:1px solid #424142"><div style="left:0;top:0;width:12px;height:12px;border-top:1px solid #fff;border-left:1px solid #fff;border-bottom:1px solid #848284;border-right:1px solid #848284"></div></div>
<svg style="left:1067px;top:453px" width="7" height="4" viewBox="0 0 7 4"><path d="M0 0H7L3.5 4z" fill="#000"/></svg>
<div style="left:773px;top:480px;width:306px;height:21px;background:#D6D3CE;border-top:1px solid #D6D3CE;border-left:1px solid #D6D3CE;border-bottom:1px solid #424142;border-right:1px solid #424142"><div style="left:0;top:0;width:304px;height:19px;border-top:1px solid #fff;border-left:1px solid #fff;border-bottom:1px solid #848284;border-right:1px solid #848284"></div></div>
<div class="t" style="left:844px;top:485px;">&lt;&lt; Get Default Incremental Where</div>
</body></html>
